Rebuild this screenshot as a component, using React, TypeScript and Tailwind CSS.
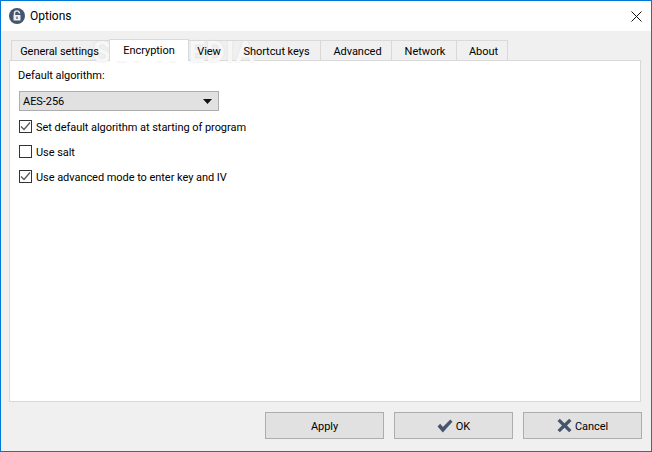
import React from "react";

const font = { fontFamily: 'Roboto, sans-serif' };
const txt = "text-[11px] leading-[16px] tracking-[-0.05px] text-black";

function Tab({ label, w, active, extra = "" }: { label: string; w: string; active?: boolean; extra?: string }) {
  return active ? (
    <div className={`${w} relative z-10 h-[22px] -mb-px -mx-px bg-white border border-[#d9d9d9] border-b-0 flex items-start justify-center pt-[3px] ${txt}`}>
      {label}
    </div>
  ) : (
    <div className={`${w} h-[20px] border border-[#d9d9d9] border-b-0 border-l-0 first:border-l flex items-center justify-center pt-[3px] ${extra} ${txt}`}>
      <span className="relative z-10">{label}</span>
    </div>
  );
}

function Check({ label, checked }: { label: string; checked?: boolean }) {
  return (
    <div className="flex items-center gap-[4px] h-[13px]">
      <div className="w-[13px] h-[13px] border border-[#333333] bg-white flex items-center justify-center shrink-0">
        {checked && (
          <svg width="11" height="11" viewBox="0 0 11 11" fill="none">
            <path d="M1 5.5 L4 8.5 L10 1.5" stroke="#555555" strokeWidth="1.2" />
          </svg>
        )}
      </div>
      <span className={`${txt} pt-[2px] whitespace-nowrap`}>{label}</span>
    </div>
  );
}

function Btn({ children }: { children: React.ReactNode }) {
  return (
    <div className={`w-[119px] h-[27px] bg-[#e1e1e1] border border-[#adadad] flex items-center justify-center gap-[3px] ${txt}`}>
      {children}
    </div>
  );
}

export default function App() {
  return (
    <div style={font} className="w-[652px] h-[452px] border border-[#0078d7] bg-[#f0f0f0] flex flex-col overflow-hidden relative">
      <div className="h-[30px] bg-white flex items-center shrink-0 pl-[8px] pr-[9px]">
        <svg width="16" height="16" viewBox="0 0 16 16">
          <circle cx="8" cy="8" r="8" fill="#46556e" />
          <path d="M5.5 7V5.4a2.5 2.5 0 0 1 5 0" fill="none" stroke="#eef0f3" strokeWidth="1.4" />
          <rect x="4.5" y="7" width="7" height="5.6" rx="0.6" fill="#eef0f3" />
          <rect x="7.4" y="8.6" width="1.2" height="2.4" fill="#46556e" />
        </svg>
        <span className="ml-[5px] text-[12px] leading-[16px] text-black">Options</span>
        <svg className="ml-auto" width="11" height="11" viewBox="0 0 11 11">
          <path d="M0.5 0.5 L10.5 10.5 M10.5 0.5 L0.5 10.5" stroke="#111111" strokeWidth="1" />
        </svg>
      </div>

      <div className="flex-1 flex flex-col px-[8px] pt-[8px] pb-[11px]">
        <div className="h-[21px] flex items-end pl-[2px] shrink-0">
          <Tab label="General settings" w="w-[99px]" extra="pr-[2px]" />
          <Tab label="Encryption" w="w-[80px]" active />
          <Tab label="View" w="w-[43px]" />
          <Tab label="Shortcut keys" w="w-[90px]" extra="pl-[2px]" />
          <Tab label="Advanced" w="w-[71px]" extra="pl-[3px]" />
          <Tab label="Network" w="w-[65px]" extra="pl-[2px]" />
          <Tab label="About" w="w-[51px]" extra="pl-[3px]" />
        </div>
        <div className="w-[632px] h-[342px] bg-white border border-[#d9d9d9] flex flex-col items-start pl-[8px] pt-[7px] shrink-0">
          <div className={txt}>Default algorithm:</div>
          <div className={`mt-[7px] ml-[1px] w-[200px] h-[20px] bg-[#e1e1e1] border border-[#adadad] flex items-center pl-[3px] pr-[6px] ${txt}`}>
            <span className="pt-[2px]">AES-256</span>
            <svg className="ml-auto" width="9" height="5" viewBox="0 0 9 5">
              <path d="M0 0H9L4.5 5Z" fill="#111111" />
            </svg>
          </div>
          <div className="mt-[9px] ml-[1px] flex flex-col gap-[12px]">
            <Check label="Set default algorithm at starting of program" checked />
            <Check label="Use salt" />
            <Check label="Use advanced mode to enter key and IV" checked />
          </div>
        </div>
        <div className="mt-[10px] flex justify-end gap-[10px] mr-[1px]">
          <Btn><span className="pt-[3px]">Apply</span></Btn>
          <Btn>
            <svg width="16" height="14" viewBox="0 0 15 13">
              <path d="M0.5 7 L3 4.5 L5.5 7.5 L12.5 0.5 L14.5 2.5 L5.5 12.5 Z" fill="#46556e" />
            </svg>
            <span className="pt-[3px]">OK</span>
          </Btn>
          <Btn>
            <svg width="15" height="15" viewBox="0 0 15 14">
              <path d="M0.5 2.5 L2.8 0.3 L7.5 4.8 L12.2 0.3 L14.5 2.5 L10 7 L14.5 11.5 L12.2 13.7 L7.5 9.2 L2.8 13.7 L0.5 11.5 L5 7 Z" fill="#46556e" />
            </svg>
            <span className="pt-[3px]">Cancel</span>
          </Btn>
        </div>
      </div>

      <div className="absolute left-[92px] top-[34px] z-[5] text-[29px] leading-[34px] font-bold tracking-[1px] text-white/80 pointer-events-none [text-shadow:0_0_2px_#d4d4d4]">
        SOFTPEDIA
      </div>
    </div>
  );
}
